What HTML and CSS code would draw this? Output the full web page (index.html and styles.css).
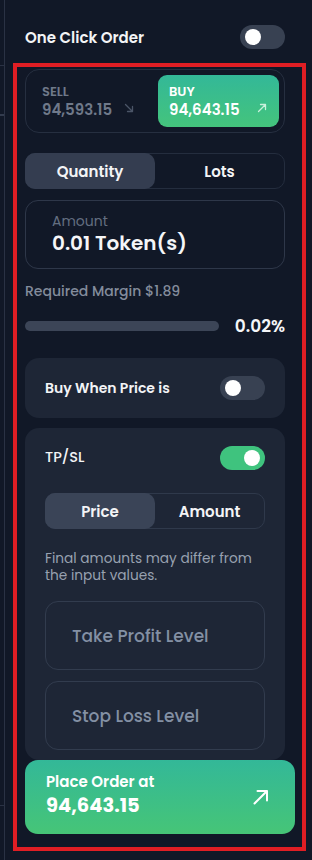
FILE: index.html
```html
<!DOCTYPE html>
<html>
<head>
<meta charset="utf-8">
<link rel="stylesheet" href="styles.css">
</head>
<body>
<div class="page">
  <div class="rail"><span class="tick t1"></span><span class="tick t2"></span><span class="tick t3"></span></div>
  <div class="content">
    <header class="top">
      <span class="top-title">One Click Order</span>
      <span class="toggle"><span class="knob"></span></span>
    </header>

    <section class="side">
      <div class="side-sell">
        <div class="side-text">
          <span class="side-label">SELL</span>
          <span class="side-price">94,593.15</span>
        </div>
        <svg class="side-arrow" width="10" height="10" viewBox="0 0 10 10"><path d="M1.5 1.5 L8.5 8.5 M3.5 8.5 H8.5 V3.5" fill="none" stroke="#4b5567" stroke-width="1.3" stroke-linecap="round" stroke-linejoin="round"/></svg>
      </div>
      <div class="side-buy">
        <div class="side-text">
          <span class="side-label">BUY</span>
          <span class="side-price">94,643.15</span>
        </div>
        <svg class="side-arrow" width="10" height="10" viewBox="0 0 10 10"><path d="M1.5 8.5 L8.5 1.5 M3.5 1.5 H8.5 V6.5" fill="none" stroke="#c9f0dc" stroke-width="1.3" stroke-linecap="round" stroke-linejoin="round"/></svg>
      </div>
    </section>

    <div class="seg seg-main">
      <span class="seg-item active">Quantity</span>
      <span class="seg-item">Lots</span>
    </div>

    <div class="field amount">
      <span class="field-label">Amount</span>
      <span class="field-value">0.01 Token(s)</span>
    </div>

    <div class="margin">Required Margin $1.89</div>

    <div class="progress-row">
      <div class="bar"></div>
      <span class="pct">0.02%</span>
    </div>

    <div class="card when">
      <span class="card-title">Buy When Price is</span>
      <span class="toggle"><span class="knob"></span></span>
    </div>

    <div class="card tpsl">
      <div class="tpsl-head">
        <span class="card-title light">TP/SL</span>
        <span class="toggle on"><span class="knob"></span></span>
      </div>
      <div class="seg seg-sub">
        <span class="seg-item active">Price</span>
        <span class="seg-item">Amount</span>
      </div>
      <p class="note">Final amounts may differ from the input values.</p>
      <div class="level">Take Profit Level</div>
      <div class="level">Stop Loss Level</div>
    </div>

    <button class="place">
      <span class="place-text">
        <span class="place-label">Place Order at</span>
        <span class="place-price">94,643.15</span>
      </span>
      <svg width="18" height="18" viewBox="0 0 18 18"><path d="M2.5 15.5 L15 3 M5.5 3 H15 V12.5" fill="none" stroke="#ffffff" stroke-width="2" stroke-linecap="round" stroke-linejoin="round"/></svg>
    </button>
  </div>
  <div class="annot"></div>
</div>
</body>
</html>
```

FILE: styles.css
```css
* { box-sizing: border-box; }
html, body { margin: 0; padding: 0; }
body {
  background: #111827;
  font-family: "Poppins", "Inter", "Noto Sans", sans-serif;
  color: #f3f4f6;
  width: 312px;
  height: 860px;
  overflow: hidden;
}
.page {
  position: relative;
  display: flex;
  height: 860px;
}
.rail {
  position: relative;
  width: 5px;
  flex: none;
  border-right: 1px solid #2a3244;
}
.tick {
  position: absolute;
  left: 0;
  width: 4px;
  height: 1px;
  background: #2a3244;
}
.t1 { top: 65px; }
.t2 { top: 114px; height: 2px; background: #333c4e; }
.t3 { top: 805px; }

.content {
  width: 287px;
  padding: 25px 0 0 20px;
  display: flex;
  flex-direction: column;
}

.top {
  display: flex;
  align-items: center;
  justify-content: space-between;
  width: 260px;
  height: 24px;
}
.top-title { font-size: 15px; font-weight: 600; color: #f3f4f6; }

.toggle {
  position: relative;
  display: inline-block;
  width: 45px;
  height: 24px;
  border-radius: 12px;
  background: #384152;
}
.toggle .knob {
  position: absolute;
  top: 4px;
  left: 5px;
  width: 16px;
  height: 16px;
  border-radius: 50%;
  background: #fff;
}
.toggle.on { background: #3fc37e; }
.toggle.on .knob { left: auto; right: 5px; }

.side {
  margin-top: 20px;
  width: 260px;
  height: 64px;
  border: 1px solid #262f40;
  border-radius: 14px;
  padding: 5px;
  display: flex;
}
.side-sell {
  flex: 1;
  display: flex;
  align-items: center;
  padding: 0 10px 0 11px;
  gap: 12px;
}
.side-buy {
  width: 121px;
  display: flex;
  align-items: center;
  justify-content: space-between;
  padding: 0 12px 0 11px;
  border-radius: 9px;
  background: linear-gradient(180deg, #33b898 0%, #44c47c 100%);
}
.side-text { display: flex; flex-direction: column; }
.side-label { font-size: 13px; font-weight: 600; line-height: 16px; }
.side-price { font-size: 15px; font-weight: 600; line-height: 19px; }
.side-sell .side-text { color: #6f798a; }
.side-buy .side-text { color: #ffffff; }
.side-arrow { margin-top: 14px; }

.seg {
  display: flex;
  border: 1px solid #242d3e;
  border-radius: 10px;
}
.seg-item {
  flex: 1;
  display: flex;
  align-items: center;
  justify-content: center;
  font-weight: 600;
  color: #f3f4f6;
  border-radius: 10px;
}
.seg-item.active { background: #343d50; }
.seg-main { margin-top: 20px; width: 260px; height: 36px; font-size: 15px; }
.seg-main .seg-item.active { flex: none; width: 130px; margin: -1px 0 -1px -1px; }
.seg-sub { margin-top: 23px; width: 220px; height: 36px; font-size: 15px; border-color: #2f394b; }
.seg-sub .seg-item.active { flex: none; width: 110px; margin: -1px 0 -1px -1px; background: #3a4457; }

.field {
  margin-top: 11px;
  width: 260px;
  height: 69px;
  border: 1px solid #2e3749;
  border-radius: 13px;
  padding: 10px 0 0 26px;
  display: flex;
  flex-direction: column;
}
.field-label { font-size: 14px; color: #636e80; line-height: 20px; }
.field-value { font-size: 20px; font-weight: 600; color: #f5f6f8; line-height: 24px; }

.margin {
  margin-top: 12px;
  font-size: 14px;
  font-weight: 500;
  color: #838c9c;
  line-height: 20px;
}

.progress-row {
  margin-top: 18px;
  width: 260px;
  display: flex;
  align-items: center;
  justify-content: space-between;
  height: 14px;
}
.bar {
  width: 194px;
  height: 10px;
  border-radius: 5px;
  background: #3c4557;
}
.pct { font-size: 17px; font-weight: 600; color: #f5f6f8; }

.card {
  width: 260px;
  background: #1e2636;
  border-radius: 14px;
}
.when {
  margin-top: 25px;
  height: 60px;
  padding: 0 20px;
  display: flex;
  align-items: center;
  justify-content: space-between;
}
.card-title { font-size: 14px; font-weight: 600; color: #f3f4f6; }
.card-title.light { font-weight: 500; font-size: 14.5px; }

.tpsl {
  margin-top: 10px;
  padding: 17px 20px 10px;
}
.tpsl-head {
  display: flex;
  align-items: center;
  justify-content: space-between;
  height: 25px;
}
.note {
  margin: 21px 0 0;
  font-size: 13.7px;
  line-height: 17px;
  color: #98a1b0;
}
.level {
  margin-top: 17px;
  height: 69px;
  border: 1px solid #323c4e;
  border-radius: 13px;
  display: flex;
  align-items: center;
  padding-left: 26px;
  font-size: 17px;
  font-weight: 500;
  color: #8390a4;
}
.level + .level { margin-top: 11px; }

.place {
  width: 270px;
  height: 74px;
  border: 0;
  border-radius: 13px;
  background: linear-gradient(180deg, #33b898 0%, #46c577 100%);
  display: flex;
  align-items: center;
  justify-content: space-between;
  padding: 0 25px 0 21px;
  font-family: inherit;
  color: #fff;
  text-align: left;
}
.place-text { display: flex; flex-direction: column; }
.place-label { font-size: 15px; font-weight: 600; line-height: 20px; margin-top: -3px; }
.place-price { font-size: 19.5px; font-weight: 700; line-height: 28px; }

.annot {
  position: absolute;
  left: 13px;
  top: 63px;
  width: 293px;
  height: 788px;
  border: 4px solid #e01e24;
  pointer-events: none;
}
```
